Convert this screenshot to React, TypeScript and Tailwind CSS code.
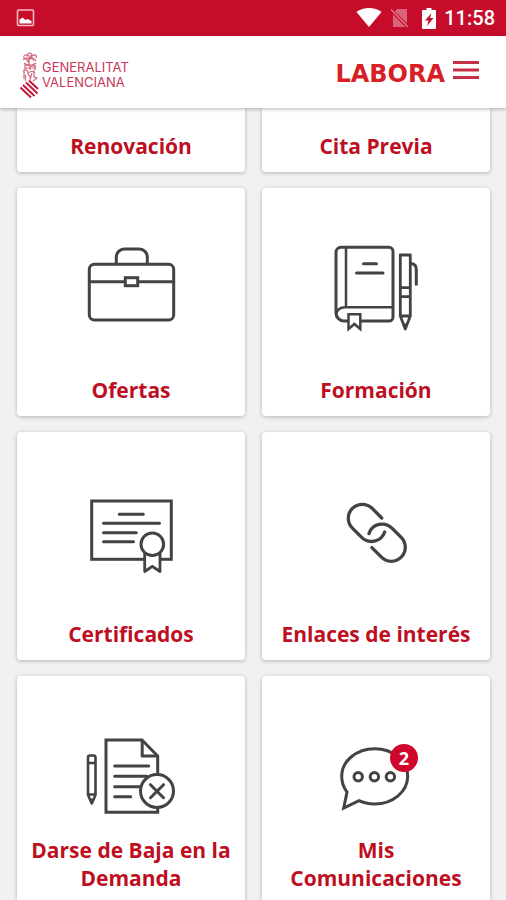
import { ReactNode } from 'react';

type IconProps = { children: ReactNode };

const Icon = ({ children }: IconProps) => (
  <svg
    width={96}
    height={96}
    viewBox="0 0 96 96"
    fill="none"
    stroke="#444243"
    strokeWidth={3}
    strokeLinejoin="round"
    aria-hidden="true"
  >
    {children}
  </svg>
);

const BriefcaseIcon = () => (
  <Icon>
    <rect x="6.3" y="24.3" width="84.4" height="55.7" rx="5" />
    <path d="M33.3 24V17a8 8 0 0 1 8-8h15a8 8 0 0 1 8 8v7" />
    <path d="M6.3 41.7H42.3M54.7 41.7H90.7" />
    <rect x="42.3" y="37.7" width="12.4" height="8" strokeLinejoin="miter" />
  </Icon>
);

const BookIcon = () => (
  <Icon>
    <path d="M20.5 81H16a8 8 0 0 1-8-8V12.3a5 5 0 0 1 5-5h48a4 4 0 0 1 4 4V77a4 4 0 0 1-4 4H32" />
    <path d="M18 7.3v60M65 67.3H17c-5 0-8 3-9 7" strokeWidth={2.5} />
    <path d="M20.5 74.3h11.8V89L26.4 84l-5.9 5z" strokeWidth={2.5} strokeLinejoin="miter" />
    <path d="M35.5 23.7h13M28.5 33h26.5" strokeLinecap="round" />
    <path d="M72.3 15h10v61l-5 13-5-13zM72.3 47.7h10M72.3 56.7h10M72.3 76h10" strokeWidth={2.8} />
    <path d="M82.3 23.5c4 0 6 2 6 6V45.5" />
    <path d="M76 84h3l-1.5 5z" fill="#444243" strokeWidth={1} />
  </Icon>
);

const CertificateIcon = () => (
  <Icon>
    <rect x="8.7" y="17" width="79.6" height="58.3" strokeLinejoin="miter" />
    <path d="M36.3 30.3h24M20.5 39.3h56M20.5 48.7h32.8M20.5 57.7h30" strokeLinecap="round" />
    <path d="M61.7 69v18.5l7.6-5.2 7.7 5.2V69" fill="#fff" strokeWidth={2.8} />
    <circle cx="69.3" cy="60.3" r="11.3" fill="#fff" />
  </Icon>
);

const LinkIcon = () => (
  <Icon>
    <g strokeWidth={3.3} strokeLinecap="round">
      <path d="M53.7 34L44.2 24.4A14 14 0 0 0 24.4 44.2L33.4 53.2A14 14 0 0 0 56.7 48" />
      <path d="M43.9 63.6L53.4 73.2A14 14 0 0 0 73.2 53.4L64.2 44.4A14 14 0 0 0 40.9 49.6" />
    </g>
  </Icon>
);

const DocumentIcon = () => (
  <Icon>
    <path d="M74.7 28v56.3H23V12h36z" strokeLinejoin="miter" />
    <path d="M59.2 12v16h15.5" />
    <path d="M31.7 38h34M31.7 48.3h32M31.7 58.7h27M31.7 68.7h16" strokeLinecap="round" />
    <circle cx="74" cy="63" r="16.5" fill="#fff" />
    <path d="M67.5 56.7l13 13M80.5 56.7l-13 13" strokeLinecap="round" />
    <path d="M5 29.5a2 2 0 0 1 2-2h3.5a2 2 0 0 1 2 2V67l-3.7 8.5L5 67zM5 35h7.5M5 66.5h7.5" strokeWidth={2.6} />
    <path d="M7.7 71h2.2l-1.1 4z" fill="#444243" strokeWidth={1} />
  </Icon>
);

const ChatIcon = () => (
  <Icon>
    <path d="M19 64C15.5 59.5 13.7 54 13.7 48.3C13.7 33 28.5 20.7 46.7 20.7S79.7 33 79.7 48.3S65 76 46.7 76C41 76 35.5 75 31 72.7L15.7 80z" strokeLinejoin="miter" />
    <circle cx="30.2" cy="48.7" r="4.2" />
    <circle cx="46.4" cy="48.7" r="4.2" />
    <circle cx="62.4" cy="48.7" r="4.2" />
  </Icon>
);

const cards = [
  { label: 'Ofertas', icon: <BriefcaseIcon /> },
  { label: 'Formación', icon: <BookIcon /> },
  { label: 'Certificados', icon: <CertificateIcon /> },
  { label: 'Enlaces de interés', icon: <LinkIcon /> },
  { label: 'Darse de Baja en la Demanda', icon: <DocumentIcon /> },
  { label: 'Mis Comunicaciones', icon: <ChatIcon />, badge: 2 },
];

const StatusBar = () => (
  <div className="h-9 shrink-0 bg-[#c60c2b] pl-4 pr-[11px] flex items-center justify-between text-white">
    <svg width="20" height="20" viewBox="0 0 20 20" fill="none" aria-hidden="true">
      <rect x="1.5" y="2" width="16" height="15.5" rx="1" stroke="#f4b9c3" strokeWidth="1.6" />
      <path d="M3.5 15.5v-4l3-2 3 2.5 2-1 4 2v2.5z" fill="#fff" />
    </svg>
    <div className="flex items-center">
      <svg width="26" height="20" viewBox="0 0 26 20" aria-hidden="true">
        <path d="M0.5 4C7-1.2 19-1.2 25.5 4L13 19z" fill="#fff" />
      </svg>
      <svg className="ml-2" width="20" height="20" viewBox="0 0 20 20" aria-hidden="true">
        <path d="M7 1h10v18H3V5z" fill="#d8637a" />
        <path d="M1 2l17 17" stroke="#c60c2b" strokeWidth="3.5" />
        <path d="M1 1.5l17 17.5" stroke="#dd7c8e" strokeWidth="1.4" />
      </svg>
      <svg className="ml-3" width="14" height="21" viewBox="0 0 14 21" aria-hidden="true">
        <path d="M4.5 0h5v2H13a1 1 0 0 1 1 1v17a1 1 0 0 1-1 1H1a1 1 0 0 1-1-1V3a1 1 0 0 1 1-1h3.5z" fill="#fff" />
        <path d="M9.5 5L3 12.5h3.5L5 18l6.500-8H8z" fill="#c60c2b" />
      </svg>
      <span className="ml-2 text-xl font-medium font-['Roboto',sans-serif]">11:58</span>
    </div>
  </div>
);

const Crest = () => (
  <svg width="20" height="46" viewBox="0 0 20 46" fill="none" stroke="#d0627a" strokeWidth="1.1" aria-hidden="true">
    <path d="M4 6c-1-3 2-4 3-2 1-4 5-4 5 0 2-2 5-1 4 2M3 8c2-3 5-2 6 0 2-3 6-2 7 1M4 11c3 3 9 3 12 0M5 6l3 4 3-6 3 5M9 3v10" />
    <path d="M4 13l12 1M5 16h11M5 13v5M10 13v5M15 13v5M3 19c2-2 5-1 5 2 2-2 6-2 7 0M4 18v9M8 20c-1 3 3 3 2 6M14 18v7l3 1-4 3M5 23c2 2-1 4 1 6M12 21l-2 7" />
    <g stroke="#c2183a" strokeWidth="2">
      <path d="M0.5 35.5L11 45.5M3 33L14.5 44M6 30.5L17.5 41.5M9 28.5L18 37" />
    </g>
  </svg>
);

const Header = () => (
  <header className="relative z-10 h-[72px] shrink-0 bg-white pl-5 pr-[27px] flex items-center justify-between shadow-[0_1px_4px_rgba(0,0,0,0.3)]">
    <a href="#" className="flex items-center gap-0.5 pt-1.5">
      <Crest />
      <span className="flex flex-col text-[13px] leading-[15px] text-[#c73955] font-['Inter',sans-serif]">
        <span>GENERALITAT</span>
        <span>VALENCIANA</span>
      </span>
    </a>
    <div className="flex items-center gap-2">
      <a href="#" className="text-2xl font-bold text-[#d71f27] pt-1 font-['DejaVu_Sans',sans-serif]">LABORA</a>
      <button type="button" aria-label="Menú" className="pb-1">
        <svg width="26" height="18" viewBox="0 0 26 18" fill="#c63046" aria-hidden="true">
          <path d="M0 0h26v3H0zM0 7.5h26v3H0zM0 15h26v3H0z" />
        </svg>
      </button>
    </div>
  </header>
);

const App = () => {
  return (
    <div className="h-screen flex flex-col bg-[#f1f1f1] font-['Open_Sans','Noto_Sans',sans-serif]">
      <StatusBar />
      <Header />
      <main className="flex-1 overflow-y-auto [scrollbar-width:none] pl-[17px] pr-4 pb-4">
        <div className="grid grid-cols-2 gap-x-[17px] gap-y-4 text-[21px] leading-7 font-bold text-[#bd0f1f] text-center">
          {['Renovación', 'Cita Previa'].map((label) => (
            <a key={label} href="#" className="h-16 pb-3 flex items-end justify-center bg-white rounded-b shadow-[0_1px_4px_rgba(0,0,0,0.25)]">
              {label}
            </a>
          ))}
          {cards.map(({ label, icon, badge }) => (
            <a
              key={label}
              href="#"
              className="aspect-square px-3 pt-13 pb-3 flex flex-col items-center bg-white rounded shadow-[0_1px_4px_rgba(0,0,0,0.25)]"
            >
              <div className="relative">
                {icon}
                {badge && (
                  <span className="absolute top-4 left-[62px] size-7 rounded-full bg-[#d0062c] text-white text-lg leading-7">
                    {badge}
                  </span>
                )}
              </div>
              <span className="mt-auto">{label}</span>
            </a>
          ))}
        </div>
      </main>
    </div>
  );
};

export default App;
